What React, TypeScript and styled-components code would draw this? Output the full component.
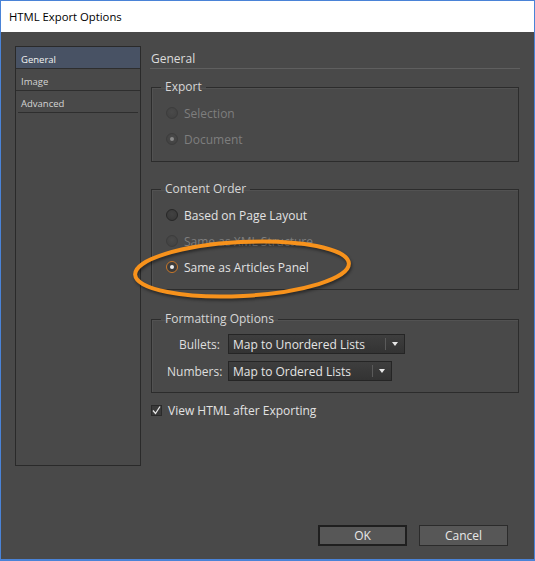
import styled, { createGlobalStyle } from "styled-components";

const GlobalStyle = createGlobalStyle`
  html, body {
    margin: 0;
    padding: 0;
    background: #ffffff;
  }
  body {
    font-family: "Open Sans", "Noto Sans", Arial, sans-serif;
  }
`;

const Window = styled.div`
  position: relative;
  box-sizing: border-box;
  width: 535px;
  height: 561px;
  border: 1px solid #4a83d7;
  border-bottom-width: 2px;
  display: flex;
  flex-direction: column;
`;

const TitleBar = styled.div`
  height: 31px;
  flex: none;
  background: #ffffff;
  display: flex;
  align-items: center;
  padding-left: 8px;
  font-size: 11.3px;
  color: #000000;
`;

const Body = styled.div`
  flex: 1;
  background: #494949;
  padding: 14px 14px 13px 14px;
  display: flex;
  flex-direction: column;
  color: #e2e2e2;
  font-size: 12px;
`;

const Main = styled.div`
  display: flex;
  gap: 9px;
`;

const Sidebar = styled.div`
  box-sizing: border-box;
  width: 126px;
  height: 420px;
  border: 1px solid #2a2a2a;
  flex: none;
`;

const NavItem = styled.div<{ $active?: boolean }>`
  box-sizing: border-box;
  height: 22px;
  display: flex;
  align-items: center;
  padding: 3px 0 0 5px;
  font-size: 9.5px;
  color: ${(p) => (p.$active ? "#f2f2f2" : "#d4d4d4")};
  background: ${(p) => (p.$active ? "#485264" : "transparent")};
  border-bottom: 1px solid #2e2e2e;
  &:last-child {
    margin: 0 2px;
    padding-left: 3px;
  }
`;

const Panel = styled.div`
  flex: 1;
  display: flex;
  flex-direction: column;
`;

const PanelHeader = styled.div`
  box-sizing: border-box;
  height: 23px;
  display: flex;
  align-items: center;
  padding: 3px 0 0 1px;
  font-size: 12px;
  color: #dcdcdc;
  border-bottom: 1px solid #5f5f5f;
`;

const Group = styled.fieldset<{ $top: number }>`
  margin: ${(p) => p.$top}px 1px 0 1px;
  padding: 0;
  border: 1px solid #2c2c2c;
  box-shadow: inset 1px 1px 0 #525252;
  min-width: 0;
`;

const Legend = styled.legend`
  margin-left: 9px;
  padding: 0 4px;
  line-height: 16px;
  font-size: 12px;
  color: #d6d6d6;
`;

const GroupBody = styled.div<{ $pt: number; $pb: number }>`
  padding: ${(p) => p.$pt}px 10px ${(p) => p.$pb}px 14px;
  display: flex;
  flex-direction: column;
`;

const RadioRow = styled.div<{ $disabled?: boolean }>`
  height: 26px;
  display: flex;
  align-items: center;
  gap: 6px;
  color: ${(p) => (p.$disabled ? "#7e7e7e" : "#e2e2e2")};
`;

const RadioDot = styled.span<{ $checked?: boolean; $disabled?: boolean; $focus?: boolean }>`
  box-sizing: border-box;
  width: 12px;
  height: 12px;
  border-radius: 50%;
  flex: none;
  border: 1px solid
    ${(p) => (p.$focus ? "#c9782a" : p.$disabled ? "#3c3c3c" : "#262626")};
  background: ${(p) =>
    p.$disabled
      ? "radial-gradient(circle at 50% 40%, #4a4a4a, #404040)"
      : "radial-gradient(circle at 50% 40%, #424242, #363636)"};
  display: flex;
  align-items: center;
  justify-content: center;
  &::after {
    content: "";
    display: ${(p) => (p.$checked ? "block" : "none")};
    width: 4px;
    height: 4px;
    border-radius: 50%;
    background: ${(p) => (p.$disabled ? "#8a8a8a" : "#eeeeee")};
  }
`;

const FieldGrid = styled.div`
  display: grid;
  grid-template-columns: 53px auto;
  column-gap: 8px;
  row-gap: 7px;
  align-items: center;
  padding: 7px 0 11px 15px;
`;

const FieldLabel = styled.span`
  text-align: right;
  color: #dedede;
  white-space: nowrap;
`;

const Select = styled.div<{ $w: number }>`
  box-sizing: border-box;
  width: ${(p) => p.$w}px;
  height: 20px;
  border: 1px solid #252525;
  background: linear-gradient(#3e3e3e, #333333);
  display: flex;
  align-items: center;
  color: #e4e4e4;
`;

const SelectText = styled.span`
  flex: 1;
  padding-left: 4px;
  white-space: nowrap;
`;

const SelectArrow = styled.span`
  width: 18px;
  height: 12px;
  border-left: 1px solid #5a5a5a;
  display: flex;
  align-items: center;
  justify-content: center;
  &::after {
    content: "";
    border-left: 3.5px solid transparent;
    border-right: 3.5px solid transparent;
    border-top: 4px solid #e8e8e8;
  }
`;

const CheckRow = styled.div`
  margin-top: 9px;
  height: 16px;
  display: flex;
  align-items: center;
  gap: 6px;
  padding-left: 1px;
`;

const CheckBox = styled.span`
  box-sizing: border-box;
  width: 11px;
  height: 11px;
  border: 1px solid #2a2a2a;
  background: #3a3a3a;
  display: flex;
  align-items: center;
  justify-content: center;
`;

const Buttons = styled.div`
  margin-top: auto;
  display: flex;
  justify-content: flex-end;
  gap: 12px;
  padding-right: 12px;
`;

const Button = styled.button<{ $default?: boolean }>`
  box-sizing: border-box;
  width: 89px;
  height: 21px;
  padding: 0;
  font-family: inherit;
  font-size: 12px;
  color: #e8e8e8;
  background: #575757;
  border: ${(p) => (p.$default ? "2px solid #1f1f1f" : "1px solid #2b2b2b")};
`;

const Highlight = styled.svg`
  position: absolute;
  left: 128px;
  top: 235px;
  overflow: visible;
  pointer-events: none;
  filter: drop-shadow(1px 2px 1.5px rgba(0, 0, 0, 0.45));
`;

export default function App() {
  return (
    <>
      <GlobalStyle />
      <Window>
        <TitleBar>HTML Export Options</TitleBar>
        <Body>
          <Main>
            <Sidebar>
              <NavItem $active>General</NavItem>
              <NavItem>Image</NavItem>
              <NavItem>Advanced</NavItem>
            </Sidebar>
            <Panel>
              <PanelHeader>General</PanelHeader>

              <Group $top={10}>
                <Legend>Export</Legend>
                <GroupBody $pt={5} $pb={9}>
                  <RadioRow $disabled>
                    <RadioDot $disabled />
                    Selection
                  </RadioRow>
                  <RadioRow $disabled>
                    <RadioDot $disabled $checked />
                    Document
                  </RadioRow>
                </GroupBody>
              </Group>

              <Group $top={19}>
                <Legend>Content Order</Legend>
                <GroupBody $pt={5} $pb={9}>
                  <RadioRow>
                    <RadioDot />
                    Based on Page Layout
                  </RadioRow>
                  <RadioRow $disabled>
                    <RadioDot $disabled />
                    Same as XML Structure
                  </RadioRow>
                  <RadioRow>
                    <RadioDot $checked $focus />
                    Same as Articles Panel
                  </RadioRow>
                </GroupBody>
              </Group>

              <Group $top={21}>
                <Legend>Formatting Options</Legend>
                <FieldGrid>
                  <FieldLabel>Bullets:</FieldLabel>
                  <Select $w={177}>
                    <SelectText>Map to Unordered Lists</SelectText>
                    <SelectArrow />
                  </Select>
                  <FieldLabel>Numbers:</FieldLabel>
                  <Select $w={164}>
                    <SelectText>Map to Ordered Lists</SelectText>
                    <SelectArrow />
                  </Select>
                </FieldGrid>
              </Group>

              <CheckRow>
                <CheckBox>
                  <svg width="9" height="9" viewBox="0 0 9 9">
                    <path d="M1 4.5 L3.5 7.5 L8 0.5" fill="none" stroke="#e6e6e6" strokeWidth="1.3" />
                  </svg>
                </CheckBox>
                View HTML after Exporting
              </CheckRow>
            </Panel>
          </Main>
          <Buttons>
            <Button $default>OK</Button>
            <Button>Cancel</Button>
          </Buttons>
        </Body>
        <Highlight width="230" height="66" viewBox="0 0 230 66">
          <ellipse
            cx="113"
            cy="33"
            rx="107"
            ry="27"
            transform="rotate(-3 113 33)"
            fill="none"
            stroke="#f7921c"
            strokeWidth="4"
          />
        </Highlight>
      </Window>
    </>
  );
}
